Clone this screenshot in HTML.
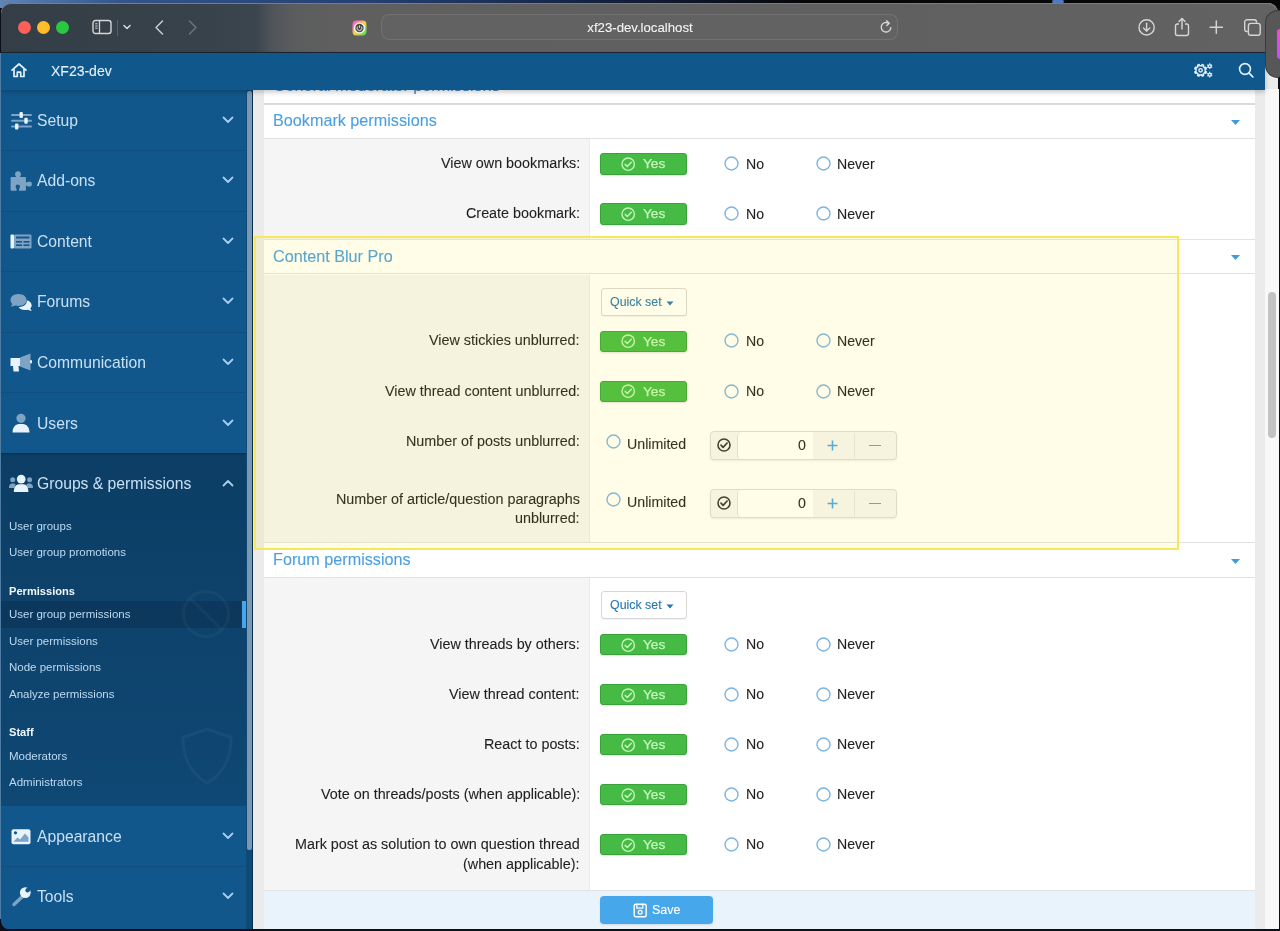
<!DOCTYPE html>
<html><head><meta charset="utf-8"><style>
html,body{margin:0;padding:0;width:1280px;height:931px;overflow:hidden;background:#0c1424;}
.a,.t{position:absolute;}
.ns{-webkit-text-stroke:0 !important;}
.t{white-space:nowrap;font-family:"Liberation Sans", sans-serif;-webkit-text-stroke:0.1px currentColor;will-change:transform;}
body{font-family:"Liberation Sans", sans-serif;}
</style></head><body>
<div class="a" style="left:0px;top:0px;width:1280px;height:931px;background:#0a0f18;"></div><div class="a" style="left:0px;top:0px;width:1280px;height:8px;background:linear-gradient(90deg,#5f84b5 0px,#34558a 120px,#243e70 380px,#111c36 640px,#060709 800px,#060709 1280px);"></div><div class="a" style="left:1052px;top:0px;width:12px;height:3px;background:#4d7bc0;border-radius:2px;"></div><div class="a" style="left:1px;top:3px;width:1277px;height:927px;border-radius:10px;overflow:hidden;background:#ebebeb;"></div><div class="a" style="left:1px;top:3px;width:1277px;height:49px;background:linear-gradient(90deg,#343e47 0px,#37424b 200px,#3b454e 255px,#50555a 272px,#5b5c5d 292px,#5f5f5f 330px,#606060 900px,#626262 1278px);border-top-left-radius:10px;border-top-right-radius:10px;box-shadow:inset 0 1px 0 #7c7c7c;"></div><div class="a" style="left:1px;top:52px;width:1277px;height:1px;background:#1c2630;"></div><div class="a" style="left:18.0px;top:20.5px;width:13px;height:13px;border-radius:50%;background:#fe5f57;"></div><div class="a" style="left:37.0px;top:20.5px;width:13px;height:13px;border-radius:50%;background:#febc2e;"></div><div class="a" style="left:56.0px;top:20.5px;width:13px;height:13px;border-radius:50%;background:#28c840;"></div><svg class="a" style="left:92px;top:19px;" width="20" height="16" viewBox="0 0 20 16"><rect x="1" y="1.5" width="18" height="13" rx="2.5" fill="none" stroke="#d6d6d6" stroke-width="1.4"/><line x1="7.5" y1="2" x2="7.5" y2="14" stroke="#d6d6d6" stroke-width="1.3"/><line x1="3.2" y1="4.8" x2="5.6" y2="4.8" stroke="#d6d6d6" stroke-width="1"/><line x1="3.2" y1="7" x2="5.6" y2="7" stroke="#d6d6d6" stroke-width="1"/><line x1="3.2" y1="9.2" x2="5.6" y2="9.2" stroke="#d6d6d6" stroke-width="1"/></svg><div class="a" style="left:117px;top:20px;width:1px;height:16px;background:#56606a;"></div><svg class="a" style="left:122px;top:23px;" width="10" height="8" viewBox="0 0 10 8"><polyline points="2,2.5 5,5.5 8,2.5" fill="none" stroke="#d6d6d6" stroke-width="1.6" stroke-linecap="round" stroke-linejoin="round"/></svg><svg class="a" style="left:153px;top:19px;" width="12" height="17" viewBox="0 0 12 17"><polyline points="9.5,2 3,8.5 9.5,15" fill="none" stroke="#c9cdd1" stroke-width="1.5" stroke-linecap="round" stroke-linejoin="round"/></svg><svg class="a" style="left:187px;top:19px;" width="12" height="17" viewBox="0 0 12 17"><polyline points="2.5,2 9,8.5 2.5,15" fill="none" stroke="#6d757b" stroke-width="1.5" stroke-linecap="round" stroke-linejoin="round"/></svg><svg class="a" style="left:352px;top:19.5px;" width="15" height="16" viewBox="0 0 15 16"><defs><linearGradient id="fg" x1="0" y1="0" x2="1" y2="1"><stop offset="0" stop-color="#ff3df0"/><stop offset=".5" stop-color="#ffd23a"/><stop offset="1" stop-color="#2fe06a"/></linearGradient></defs><rect x="0.5" y="0.5" width="14" height="15" rx="4" fill="url(#fg)"/><circle cx="7.5" cy="8" r="5.6" fill="#f4f4f4"/><circle cx="7.5" cy="8" r="4.2" fill="#4a4a4a"/><path d="M5.6 6.6 A2.4 2.4 0 1 0 9.4 6.6" fill="none" stroke="#eee" stroke-width="0.9"/><line x1="7.5" y1="5.4" x2="7.5" y2="7.8" stroke="#eee" stroke-width="0.9"/></svg><div class="a" style="left:381px;top:14px;width:517px;height:26px;background:#626262;border-radius:8px;box-shadow:inset 0 0 0 1px rgba(255,255,255,0.10);"></div><div class="t" style="top:18.83px;font-size:13.2px;line-height:18px;color:#f4f4f4;font-weight:400;left:340.00px;width:600px;text-align:center;">xf23-dev.localhost</div><svg class="a" style="left:879px;top:19px;" width="15" height="16" viewBox="0 0 15 16"><path d="M11.8 8.8 A4.8 4.8 0 1 1 9.6 4.2" fill="none" stroke="#d6d6d6" stroke-width="1.4" stroke-linecap="round"/><polyline points="7.6,1.8 10.2,4.2 7.8,6.6" fill="none" stroke="#d6d6d6" stroke-width="1.4" stroke-linecap="round" stroke-linejoin="round"/></svg><svg class="a" style="left:1137px;top:17.5px;" width="19" height="19" viewBox="0 0 19 19"><circle cx="9.6" cy="9.4" r="7.6" fill="none" stroke="#d6d6d6" stroke-width="1.4"/><line x1="9.6" y1="5.2" x2="9.6" y2="13" stroke="#d6d6d6" stroke-width="1.4" stroke-linecap="round"/><polyline points="6.5,10 9.6,13.1 12.7,10" fill="none" stroke="#d6d6d6" stroke-width="1.4" stroke-linecap="round" stroke-linejoin="round"/></svg><svg class="a" style="left:1173px;top:16.5px;" width="18" height="20" viewBox="0 0 18 20"><path d="M6 7 H4.5 A2 2 0 0 0 2.5 9 V16.5 A2 2 0 0 0 4.5 18.5 H13.5 A2 2 0 0 0 15.5 16.5 V9 A2 2 0 0 0 13.5 7 H12" fill="none" stroke="#d6d6d6" stroke-width="1.4"/><line x1="9" y1="1.8" x2="9" y2="12" stroke="#d6d6d6" stroke-width="1.4" stroke-linecap="round"/><polyline points="6,4.6 9,1.6 12,4.6" fill="none" stroke="#d6d6d6" stroke-width="1.4" stroke-linecap="round" stroke-linejoin="round"/></svg><svg class="a" style="left:1208px;top:18.5px;" width="16" height="16" viewBox="0 0 16 16"><line x1="8.3" y1="2" x2="8.3" y2="14.3" stroke="#d6d6d6" stroke-width="1.5" stroke-linecap="round"/><line x1="2.1" y1="8.2" x2="14.4" y2="8.2" stroke="#d6d6d6" stroke-width="1.5" stroke-linecap="round"/></svg><svg class="a" style="left:1243px;top:18px;" width="19" height="19" viewBox="0 0 19 19"><path d="M4.8 13.5 H4 A2.3 2.3 0 0 1 1.7 11.2 V4 A2.3 2.3 0 0 1 4 1.7 H11.2 A2.3 2.3 0 0 1 13.5 4 V4.8" fill="none" stroke="#d6d6d6" stroke-width="1.4"/><rect x="5.4" y="5.4" width="11.8" height="11.8" rx="2.3" fill="none" stroke="#d6d6d6" stroke-width="1.4"/></svg><div class="a" style="left:1265.5px;top:11px;width:24px;height:66px;background:#575757;border-radius:13px;box-shadow:0 0 0 1px #3a3a3a;z-index:20;"></div><div class="a" style="left:1277px;top:29px;width:6px;height:30px;background:linear-gradient(180deg,#ff46d6,#c24dff);border-radius:3px;z-index:21;"></div><div class="a" style="left:1px;top:53px;width:1264px;height:36.5px;background:#10578c;z-index:5;box-shadow:0 2px 5px rgba(0,0,0,.22);"></div><svg class="a" style="left:10px;top:62px;z-index:6;" width="18" height="16" viewBox="0 0 18 16"><path d="M2 8.2 L9 2 L16 8.2" fill="none" stroke="#e4f0fb" stroke-width="1.7" stroke-linecap="round" stroke-linejoin="round"/><path d="M4 7 V14.5 H7.3 V10.2 H10.7 V14.5 H14 V7" fill="none" stroke="#e4f0fb" stroke-width="1.7" stroke-linejoin="round"/></svg><div class="t" style="top:60.95px;font-size:14.0px;line-height:20px;color:#e4f0fb;font-weight:400;left:50.80px;z-index:6;">XF23-dev</div><svg class="a" style="left:1193px;top:62px;z-index:6;" width="21" height="18" viewBox="0 0 21 18"><path d="M12.20,8.30 L12.09,9.29 L13.39,9.86 L12.80,11.29 L11.47,10.78 L10.85,11.55 L10.08,12.17 L10.59,13.50 L9.16,14.09 L8.59,12.79 L7.60,12.90 L6.61,12.79 L6.04,14.09 L4.61,13.50 L5.12,12.17 L4.35,11.55 L3.73,10.78 L2.40,11.29 L1.81,9.86 L3.11,9.29 L3.00,8.30 L3.11,7.31 L1.81,6.74 L2.40,5.31 L3.73,5.82 L4.35,5.05 L5.12,4.43 L4.61,3.10 L6.04,2.51 L6.61,3.81 L7.60,3.70 L8.59,3.81 L9.16,2.51 L10.59,3.10 L10.08,4.43 L10.85,5.05 L11.47,5.82 L12.80,5.31 L13.39,6.74 L12.09,7.31 Z" fill="none" stroke="#e4f0fb" stroke-width="1.5" stroke-linejoin="round"/><circle cx="7.6" cy="8.3" r="1.7" fill="none" stroke="#e4f0fb" stroke-width="1.4"/><path d="M18.80,4.20 L18.73,4.74 L19.45,5.12 L18.88,6.12 L18.18,5.68 L17.75,6.02 L17.24,6.23 L17.27,7.04 L16.13,7.04 L16.16,6.23 L15.65,6.02 L15.22,5.68 L14.52,6.12 L13.95,5.12 L14.67,4.74 L14.60,4.20 L14.67,3.66 L13.95,3.28 L14.52,2.28 L15.22,2.72 L15.65,2.38 L16.16,2.17 L16.13,1.36 L17.27,1.36 L17.24,2.17 L17.75,2.38 L18.18,2.72 L18.88,2.28 L19.45,3.28 L18.73,3.66 Z" fill="#e4f0fb"/><path d="M18.80,12.70 L18.73,13.24 L19.45,13.62 L18.88,14.62 L18.18,14.18 L17.75,14.52 L17.24,14.73 L17.27,15.54 L16.13,15.54 L16.16,14.73 L15.65,14.52 L15.22,14.18 L14.52,14.62 L13.95,13.62 L14.67,13.24 L14.60,12.70 L14.67,12.16 L13.95,11.78 L14.52,10.78 L15.22,11.22 L15.65,10.88 L16.16,10.67 L16.13,9.86 L17.27,9.86 L17.24,10.67 L17.75,10.88 L18.18,11.22 L18.88,10.78 L19.45,11.78 L18.73,12.16 Z" fill="#e4f0fb"/><circle cx="16.7" cy="4.2" r="0.8" fill="#10578c"/><circle cx="16.7" cy="12.7" r="0.8" fill="#10578c"/></svg><svg class="a" style="left:1237px;top:62px;z-index:6;" width="18" height="18" viewBox="0 0 18 18"><circle cx="8" cy="7" r="5.4" fill="none" stroke="#e4f0fb" stroke-width="1.6"/><line x1="11.9" y1="10.9" x2="15.8" y2="14.8" stroke="#e4f0fb" stroke-width="1.8" stroke-linecap="round"/></svg><div class="a" style="left:1px;top:89px;width:245px;height:841px;background:#11578b;"></div><div class="a" style="left:246px;top:89px;width:6px;height:841px;background:#0e4a77;"></div><div class="a" style="left:252px;top:89px;width:1px;height:841px;background:#0b2f4a;"></div><div class="a" style="left:1px;top:150px;width:244px;height:1px;background:#0f4e7e;"></div><div class="a" style="left:1px;top:211px;width:244px;height:1px;background:#0f4e7e;"></div><div class="a" style="left:1px;top:271px;width:244px;height:1px;background:#0f4e7e;"></div><div class="a" style="left:1px;top:332px;width:244px;height:1px;background:#0f4e7e;"></div><div class="a" style="left:1px;top:392px;width:244px;height:1px;background:#0f4e7e;"></div><div class="a" style="left:1px;top:866px;width:244px;height:1px;background:#0f4e7e;"></div><div class="a" style="left:1px;top:453px;width:245px;height:353px;background:linear-gradient(180deg,#0c3e65 0px,#0d4169 120px,#0f4874 353px);box-shadow:inset 0 2px 2px -1px rgba(0,0,0,.25);"></div><div class="a" style="left:1px;top:601px;width:245px;height:27px;background:#0b385c;"></div><div class="a" style="left:242px;top:601px;width:4px;height:27px;background:#4aa6ec;"></div><svg class="a" style="left:180px;top:588px;opacity:.035;" width="52" height="52" viewBox="0 0 52 52"><g fill="none" stroke="#ffffff" stroke-width="3"><circle cx="26" cy="26" r="22.5"/><line x1="11" y1="11" x2="41" y2="41"/></g></svg><svg class="a" style="left:179px;top:726px;opacity:.035;" width="56" height="60" viewBox="0 0 56 60"><path d="M28 3 C36 6 44 9 52 11 C52 34 44 48 28 57 C12 48 4 34 4 11 C12 9 20 6 28 3 Z" fill="none" stroke="#ffffff" stroke-width="3" stroke-linejoin="round"/></svg><div class="a" style="left:247px;top:91px;width:4.5px;height:759px;background:#7b98b3;border-radius:2px;"></div><div class="t ns" style="top:109.86px;font-size:15.7px;line-height:22px;color:#c8e0f4;font-weight:400;left:36.80px;">Setup</div><svg class="a" style="left:222px;top:116px;" width="12" height="8" viewBox="0 0 12 8"><polyline points="1.5,1.5 6,6 10.5,1.5" fill="none" stroke="#a8cdee" stroke-width="1.8" stroke-linecap="round" stroke-linejoin="round"/></svg><div class="t ns" style="top:170.26px;font-size:15.7px;line-height:22px;color:#c8e0f4;font-weight:400;left:36.80px;">Add-ons</div><svg class="a" style="left:222px;top:176.4px;" width="12" height="8" viewBox="0 0 12 8"><polyline points="1.5,1.5 6,6 10.5,1.5" fill="none" stroke="#a8cdee" stroke-width="1.8" stroke-linecap="round" stroke-linejoin="round"/></svg><div class="t ns" style="top:230.86px;font-size:15.7px;line-height:22px;color:#c8e0f4;font-weight:400;left:36.80px;">Content</div><svg class="a" style="left:222px;top:237px;" width="12" height="8" viewBox="0 0 12 8"><polyline points="1.5,1.5 6,6 10.5,1.5" fill="none" stroke="#a8cdee" stroke-width="1.8" stroke-linecap="round" stroke-linejoin="round"/></svg><div class="t ns" style="top:291.26px;font-size:15.7px;line-height:22px;color:#c8e0f4;font-weight:400;left:36.80px;">Forums</div><svg class="a" style="left:222px;top:297.4px;" width="12" height="8" viewBox="0 0 12 8"><polyline points="1.5,1.5 6,6 10.5,1.5" fill="none" stroke="#a8cdee" stroke-width="1.8" stroke-linecap="round" stroke-linejoin="round"/></svg><div class="t ns" style="top:351.56px;font-size:15.7px;line-height:22px;color:#c8e0f4;font-weight:400;left:36.80px;">Communication</div><svg class="a" style="left:222px;top:357.7px;" width="12" height="8" viewBox="0 0 12 8"><polyline points="1.5,1.5 6,6 10.5,1.5" fill="none" stroke="#a8cdee" stroke-width="1.8" stroke-linecap="round" stroke-linejoin="round"/></svg><div class="t ns" style="top:412.56px;font-size:15.7px;line-height:22px;color:#c8e0f4;font-weight:400;left:36.80px;">Users</div><svg class="a" style="left:222px;top:418.7px;" width="12" height="8" viewBox="0 0 12 8"><polyline points="1.5,1.5 6,6 10.5,1.5" fill="none" stroke="#a8cdee" stroke-width="1.8" stroke-linecap="round" stroke-linejoin="round"/></svg><div class="t ns" style="top:473.06px;font-size:15.7px;line-height:22px;color:#c8e0f4;font-weight:400;left:36.80px;">Groups &amp; permissions</div><svg class="a" style="left:222px;top:479.2px;" width="12" height="8" viewBox="0 0 12 8"><polyline points="1.5,6.5 6,2 10.5,6.5" fill="none" stroke="#a8cdee" stroke-width="1.8" stroke-linecap="round" stroke-linejoin="round"/></svg><div class="t ns" style="top:826.16px;font-size:15.7px;line-height:22px;color:#c8e0f4;font-weight:400;left:36.80px;">Appearance</div><svg class="a" style="left:222px;top:832.3px;" width="12" height="8" viewBox="0 0 12 8"><polyline points="1.5,1.5 6,6 10.5,1.5" fill="none" stroke="#a8cdee" stroke-width="1.8" stroke-linecap="round" stroke-linejoin="round"/></svg><div class="t ns" style="top:886.16px;font-size:15.7px;line-height:22px;color:#c8e0f4;font-weight:400;left:36.80px;">Tools</div><svg class="a" style="left:222px;top:892.3px;" width="12" height="8" viewBox="0 0 12 8"><polyline points="1.5,1.5 6,6 10.5,1.5" fill="none" stroke="#a8cdee" stroke-width="1.8" stroke-linecap="round" stroke-linejoin="round"/></svg><div class="t ns" style="top:517.72px;font-size:11.5px;line-height:16px;color:#bcd9f0;font-weight:400;left:9.20px;">User groups</div><div class="t ns" style="top:543.82px;font-size:11.5px;line-height:16px;color:#bcd9f0;font-weight:400;left:9.20px;">User group promotions</div><div class="t ns" style="top:582.95px;font-size:11.1px;line-height:16px;color:#f2f7fb;font-weight:700;left:9.20px;">Permissions</div><div class="t ns" style="top:606.02px;font-size:11.5px;line-height:16px;color:#bcd9f0;font-weight:400;left:9.20px;">User group permissions</div><div class="t ns" style="top:632.62px;font-size:11.5px;line-height:16px;color:#bcd9f0;font-weight:400;left:9.20px;">User permissions</div><div class="t ns" style="top:658.82px;font-size:11.5px;line-height:16px;color:#bcd9f0;font-weight:400;left:9.20px;">Node permissions</div><div class="t ns" style="top:685.62px;font-size:11.5px;line-height:16px;color:#bcd9f0;font-weight:400;left:9.20px;">Analyze permissions</div><div class="t ns" style="top:724.35px;font-size:11.1px;line-height:16px;color:#f2f7fb;font-weight:700;left:9.20px;">Staff</div><div class="t ns" style="top:747.92px;font-size:11.5px;line-height:16px;color:#bcd9f0;font-weight:400;left:9.20px;">Moderators</div><div class="t ns" style="top:774.32px;font-size:11.5px;line-height:16px;color:#bcd9f0;font-weight:400;left:9.20px;">Administrators</div><svg class="a" style="left:10px;top:110px;" width="23" height="20" viewBox="0 0 23 20"><g stroke="#7fa3c4" stroke-width="2" stroke-linecap="round"><line x1="2" y1="5" x2="21" y2="5"/><line x1="2" y1="10.8" x2="21" y2="10.8"/><line x1="2" y1="16.6" x2="21" y2="16.6"/></g><g fill="#e9f3fb"><rect x="9.5" y="2" width="3.4" height="6" rx="1"/><rect x="14.3" y="7.8" width="3.4" height="6" rx="1"/><rect x="5" y="13.6" width="3.4" height="6" rx="1"/></g></svg><svg class="a" style="left:9px;top:170px;" width="24" height="22" viewBox="0 0 24 22"><rect x="1.6" y="7" width="15.3" height="13.7" rx="0.8" fill="#7fa3c4"/><circle cx="9" cy="4.2" r="2.9" fill="#7fa3c4"/><rect x="7.3" y="5" width="3.4" height="3" fill="#7fa3c4"/><circle cx="20.3" cy="14" r="2.6" fill="#7fa3c4"/><rect x="16" y="12.3" width="3" height="3.4" fill="#7fa3c4"/><circle cx="8.8" cy="16.8" r="2.2" fill="#11578b"/><rect x="7.6" y="17" width="2.4" height="4" fill="#11578b"/></svg><svg class="a" style="left:9px;top:233px;" width="24" height="17" viewBox="0 0 24 17"><rect x="1.5" y="1.5" width="3.5" height="14" rx="1" fill="#e9f3fb"/><rect x="5" y="1.5" width="17.5" height="14" rx="1.2" fill="#7fa3c4"/><g fill="#11578b"><rect x="7" y="3.5" width="13.5" height="2"/><rect x="7" y="8" width="6" height="1.6"/><rect x="14.5" y="8" width="6" height="1.6"/><rect x="7" y="11.4" width="6" height="1.6"/><rect x="14.5" y="11.4" width="6" height="1.6"/></g></svg><svg class="a" style="left:9px;top:292px;" width="24" height="20" viewBox="0 0 24 20"><path d="M9.5 2 C4.5 2 1.5 4.8 1.5 8 C1.5 9.6 2.3 11 3.5 12 L1.5 14.8 L6.5 13.5 C7.5 13.8 8.5 14 9.5 14 C14.5 14 17.5 11.2 17.5 8 C17.5 4.8 14.5 2 9.5 2 Z" fill="#7fa3c4"/><path d="M17.8 8.2 C20.8 9 22.7 11 22.7 13.2 C22.7 14.4 22.1 15.5 21.2 16.3 L22.7 19 L18.5 17.8 C17.7 18 16.9 18.1 16 18.1 C13 18.1 10.6 16.8 9.6 15 C14.5 15 18.2 12.2 17.8 8.2 Z" fill="#e9f3fb"/></svg><svg class="a" style="left:9px;top:352px;" width="24" height="21" viewBox="0 0 24 21"><path d="M11 5.5 L21.5 1.5 V18.5 L11 14.5 Z" fill="#7fa3c4"/><rect x="21" y="8" width="2" height="3.5" rx="1" fill="#e9f3fb"/><path d="M1.5 6 H11 V14 H9.5 L10 19.5 H4.5 L4 14 H1.5 Z" fill="#e9f3fb"/></svg><svg class="a" style="left:11px;top:412px;" width="20" height="22" viewBox="0 0 20 22"><circle cx="10" cy="6.3" r="4.6" fill="#7fa3c4"/><path d="M1.5 20.5 C1.5 15.5 4.5 12 8 12 H12 C15.5 12 18.5 15.5 18.5 20.5 Z" fill="#e9f3fb"/></svg><svg class="a" style="left:8px;top:473px;" width="26" height="21" viewBox="0 0 26 21"><g fill="#7fa3c4"><circle cx="4.7" cy="6.8" r="2.5"/><circle cx="21.6" cy="6.8" r="2.5"/><path d="M1 15 C1 11.5 2.5 10.5 4.8 10.5 C6 10.5 7 10.8 7.5 11.5 L6.5 15 Z"/><path d="M25 15 C25 11.5 23.5 10.5 21.2 10.5 C20 10.5 19 10.8 18.5 11.5 L19.5 15 Z"/></g><circle cx="13.2" cy="6.1" r="4.4" fill="#e9f3fb"/><path d="M5.8 19 C5.8 14 8 11.2 11 11.2 H15.4 C18.4 11.2 20.4 14 20.4 19 Z" fill="#e9f3fb"/></svg><svg class="a" style="left:10px;top:828px;" width="22" height="17" viewBox="0 0 22 17"><rect x="1.5" y="1.2" width="19" height="15" rx="2" fill="#e9f3fb"/><path d="M3.5 13.8 L7.5 9.5 L10 11.5 L15 5.5 L18.5 9.5 V13.8 Z" fill="#7fa3c4"/><circle cx="5.5" cy="4.8" r="1.6" fill="#11578b"/></svg><svg class="a" style="left:9px;top:884px;" width="24" height="24" viewBox="0 0 24 24"><path d="M15 11 L5 20.5" stroke="#7fa3c4" stroke-width="3.4" stroke-linecap="round"/><circle cx="16.3" cy="8.6" r="5.4" fill="#e9f3fb"/><circle cx="18.6" cy="6.3" r="2.2" fill="#11578b"/><path d="M18.2 5 L21.5 1.7 L23.6 3.8 L20.3 7.1 Z" fill="#11578b"/></svg><div class="a" style="left:253px;top:89px;width:1012px;height:841px;background:#ebebeb;"></div><div class="a" style="left:264px;top:89px;width:991px;height:841px;background:#ffffff;"></div><div class="t" style="top:74.39px;font-size:16.2px;line-height:23px;color:#3f8ccc;font-weight:400;left:273.00px;">General moderator permissions</div><div class="a" style="left:264px;top:104px;width:991px;height:34px;background:#ffffff;"></div><div class="a" style="left:264px;top:138px;width:991px;height:1px;background:#e2e2e2;"></div><div class="t" style="top:109.39px;font-size:16.2px;line-height:23px;color:#4a9fe0;font-weight:400;left:273.00px;">Bookmark permissions</div><svg class="a" style="left:1229.5px;top:118.8px;" width="11" height="7" viewBox="0 0 11 7"><path d="M1 1 H10 L5.5 6 Z" fill="#3d9be0"/></svg><div class="a" style="left:264px;top:103px;width:991px;height:2px;background:#dadada;"></div><div class="a" style="left:264px;top:139px;width:325px;height:100px;background:#f5f5f5;"></div><div class="a" style="left:589px;top:139px;width:1px;height:100px;background:#ebebeb;"></div><div class="a" style="left:264px;top:239px;width:991px;height:1px;background:#e2e2e2;"></div><div class="t" style="top:153.13px;font-size:14.35px;line-height:20px;color:#1f1f1f;font-weight:400;right:700.10px;text-align:right;">View own bookmarks:</div><div class="a" style="left:600px;top:153.3px;width:86.5px;height:21.3px;background:#45bb45;border:1px solid #3aa23a;box-sizing:border-box;border-radius:3px;box-shadow:0 1px 2px rgba(0,0,0,.12);"></div><svg class="a" style="left:620.4px;top:155.8px;" width="16.4" height="16.4" viewBox="0 0 16.4 16.4"><circle cx="8.2" cy="8.2" r="6.2" fill="none" stroke="#c0f5b6" stroke-width="1.45"/><polyline points="5.199999999999999,8.399999999999999 7.299999999999999,10.5 11.299999999999999,6.199999999999999" fill="none" stroke="#c0f5b6" stroke-width="1.55" stroke-linecap="round" stroke-linejoin="round"/></svg><div class="t" style="top:154.35px;font-size:13.7px;line-height:19px;color:#c6f7bd;font-weight:400;left:643.00px;-webkit-text-stroke:0.25px currentColor;">Yes</div><svg class="a" style="left:724.1px;top:156.10000000000002px;" width="15" height="15" viewBox="0 0 15 15"><circle cx="7.5" cy="7.5" r="6.5" fill="#ffffff" stroke="#7db3df" stroke-width="1.4"/></svg><div class="t" style="top:153.71px;font-size:14.1px;line-height:20px;color:#1f1f1f;font-weight:400;left:745.60px;">No</div><svg class="a" style="left:815.8px;top:156.10000000000002px;" width="15" height="15" viewBox="0 0 15 15"><circle cx="7.5" cy="7.5" r="6.5" fill="#ffffff" stroke="#7db3df" stroke-width="1.4"/></svg><div class="t" style="top:153.71px;font-size:14.1px;line-height:20px;color:#1f1f1f;font-weight:400;left:837.20px;">Never</div><div class="t" style="top:203.13px;font-size:14.35px;line-height:20px;color:#1f1f1f;font-weight:400;right:700.10px;text-align:right;">Create bookmark:</div><div class="a" style="left:600px;top:203.3px;width:86.5px;height:21.3px;background:#45bb45;border:1px solid #3aa23a;box-sizing:border-box;border-radius:3px;box-shadow:0 1px 2px rgba(0,0,0,.12);"></div><svg class="a" style="left:620.4px;top:205.8px;" width="16.4" height="16.4" viewBox="0 0 16.4 16.4"><circle cx="8.2" cy="8.2" r="6.2" fill="none" stroke="#c0f5b6" stroke-width="1.45"/><polyline points="5.199999999999999,8.399999999999999 7.299999999999999,10.5 11.299999999999999,6.199999999999999" fill="none" stroke="#c0f5b6" stroke-width="1.55" stroke-linecap="round" stroke-linejoin="round"/></svg><div class="t" style="top:204.35px;font-size:13.7px;line-height:19px;color:#c6f7bd;font-weight:400;left:643.00px;-webkit-text-stroke:0.25px currentColor;">Yes</div><svg class="a" style="left:724.1px;top:206.10000000000002px;" width="15" height="15" viewBox="0 0 15 15"><circle cx="7.5" cy="7.5" r="6.5" fill="#ffffff" stroke="#7db3df" stroke-width="1.4"/></svg><div class="t" style="top:203.71px;font-size:14.1px;line-height:20px;color:#1f1f1f;font-weight:400;left:745.60px;">No</div><svg class="a" style="left:815.8px;top:206.10000000000002px;" width="15" height="15" viewBox="0 0 15 15"><circle cx="7.5" cy="7.5" r="6.5" fill="#ffffff" stroke="#7db3df" stroke-width="1.4"/></svg><div class="t" style="top:203.71px;font-size:14.1px;line-height:20px;color:#1f1f1f;font-weight:400;left:837.20px;">Never</div><div class="a" style="left:264px;top:239.5px;width:991px;height:34px;background:#ffffff;"></div><div class="a" style="left:264px;top:273px;width:991px;height:1px;background:#e2e2e2;"></div><div class="t" style="top:244.89px;font-size:16.2px;line-height:23px;color:#4a9fe0;font-weight:400;left:273.00px;">Content Blur Pro</div><svg class="a" style="left:1229.5px;top:254.3px;" width="11" height="7" viewBox="0 0 11 7"><path d="M1 1 H10 L5.5 6 Z" fill="#3d9be0"/></svg><div class="a" style="left:264px;top:274.5px;width:325px;height:268.0px;background:#f5f5f5;"></div><div class="a" style="left:589px;top:274.5px;width:1px;height:268.0px;background:#ebebeb;"></div><div class="a" style="left:264px;top:542px;width:991px;height:1px;background:#e2e2e2;"></div><div class="a" style="left:600.5px;top:288.3px;width:86px;height:27.5px;background:#ffffff;border:1px solid #d8d8d8;box-sizing:border-box;border-radius:3px;box-shadow:0 1px 1px rgba(0,0,0,.06);"></div><div class="t" style="top:293.80px;font-size:12.4px;line-height:17px;color:#2577b1;font-weight:400;left:609.90px;">Quick set</div><svg class="a" style="left:666px;top:300.8px;" width="8" height="5" viewBox="0 0 8 5"><path d="M0.5 0.5 H7.5 L4 4.5 Z" fill="#2577b1"/></svg><div class="t" style="top:330.33px;font-size:14.35px;line-height:20px;color:#1f1f1f;font-weight:400;right:700.10px;text-align:right;">View stickies unblurred:</div><div class="a" style="left:600px;top:330.5px;width:86.5px;height:21.3px;background:#45bb45;border:1px solid #3aa23a;box-sizing:border-box;border-radius:3px;box-shadow:0 1px 2px rgba(0,0,0,.12);"></div><svg class="a" style="left:620.4px;top:333.0px;" width="16.4" height="16.4" viewBox="0 0 16.4 16.4"><circle cx="8.2" cy="8.2" r="6.2" fill="none" stroke="#c0f5b6" stroke-width="1.45"/><polyline points="5.199999999999999,8.399999999999999 7.299999999999999,10.5 11.299999999999999,6.199999999999999" fill="none" stroke="#c0f5b6" stroke-width="1.55" stroke-linecap="round" stroke-linejoin="round"/></svg><div class="t" style="top:331.55px;font-size:13.7px;line-height:19px;color:#c6f7bd;font-weight:400;left:643.00px;-webkit-text-stroke:0.25px currentColor;">Yes</div><svg class="a" style="left:724.1px;top:333.3px;" width="15" height="15" viewBox="0 0 15 15"><circle cx="7.5" cy="7.5" r="6.5" fill="#ffffff" stroke="#7db3df" stroke-width="1.4"/></svg><div class="t" style="top:330.91px;font-size:14.1px;line-height:20px;color:#1f1f1f;font-weight:400;left:745.60px;">No</div><svg class="a" style="left:815.8px;top:333.3px;" width="15" height="15" viewBox="0 0 15 15"><circle cx="7.5" cy="7.5" r="6.5" fill="#ffffff" stroke="#7db3df" stroke-width="1.4"/></svg><div class="t" style="top:330.91px;font-size:14.1px;line-height:20px;color:#1f1f1f;font-weight:400;left:837.20px;">Never</div><div class="t" style="top:380.53px;font-size:14.35px;line-height:20px;color:#1f1f1f;font-weight:400;right:700.10px;text-align:right;">View thread content unblurred:</div><div class="a" style="left:600px;top:380.7px;width:86.5px;height:21.3px;background:#45bb45;border:1px solid #3aa23a;box-sizing:border-box;border-radius:3px;box-shadow:0 1px 2px rgba(0,0,0,.12);"></div><svg class="a" style="left:620.4px;top:383.2px;" width="16.4" height="16.4" viewBox="0 0 16.4 16.4"><circle cx="8.2" cy="8.2" r="6.2" fill="none" stroke="#c0f5b6" stroke-width="1.45"/><polyline points="5.199999999999999,8.399999999999999 7.299999999999999,10.5 11.299999999999999,6.199999999999999" fill="none" stroke="#c0f5b6" stroke-width="1.55" stroke-linecap="round" stroke-linejoin="round"/></svg><div class="t" style="top:381.75px;font-size:13.7px;line-height:19px;color:#c6f7bd;font-weight:400;left:643.00px;-webkit-text-stroke:0.25px currentColor;">Yes</div><svg class="a" style="left:724.1px;top:383.5px;" width="15" height="15" viewBox="0 0 15 15"><circle cx="7.5" cy="7.5" r="6.5" fill="#ffffff" stroke="#7db3df" stroke-width="1.4"/></svg><div class="t" style="top:381.11px;font-size:14.1px;line-height:20px;color:#1f1f1f;font-weight:400;left:745.60px;">No</div><svg class="a" style="left:815.8px;top:383.5px;" width="15" height="15" viewBox="0 0 15 15"><circle cx="7.5" cy="7.5" r="6.5" fill="#ffffff" stroke="#7db3df" stroke-width="1.4"/></svg><div class="t" style="top:381.11px;font-size:14.1px;line-height:20px;color:#1f1f1f;font-weight:400;left:837.20px;">Never</div><div class="t" style="top:430.53px;font-size:14.35px;line-height:20px;color:#1f1f1f;font-weight:400;right:700.10px;text-align:right;">Number of posts unblurred:</div><svg class="a" style="left:606.2px;top:434.3px;" width="15" height="15" viewBox="0 0 15 15"><circle cx="7.5" cy="7.5" r="6.5" fill="#ffffff" stroke="#7db3df" stroke-width="1.4"/></svg><div class="t" style="top:434.28px;font-size:14.2px;line-height:20px;color:#1f1f1f;font-weight:400;left:627.20px;">Unlimited</div><div class="a" style="left:710px;top:431.2px;width:187px;height:28.5px;background:#f6f6f6;border:1px solid #dcdcdc;box-sizing:border-box;border-radius:4px;box-shadow:0 1px 2px rgba(0,0,0,.08);"></div><div class="a" style="left:737px;top:432.2px;width:75px;height:26.5px;background:#ffffff;border-left:1px solid #e0e0e0;border-radius:4px 0 0 4px;"></div><div class="a" style="left:853.5px;top:433.2px;width:1px;height:24.5px;background:#e4e4e4;"></div><svg class="a" style="left:715.6px;top:437.2px;" width="16" height="16" viewBox="0 0 16 16"><circle cx="8.0" cy="8.0" r="6" fill="none" stroke="#333333" stroke-width="1.6"/><polyline points="5.0,8.2 7.1,10.3 11.1,6.0" fill="none" stroke="#333333" stroke-width="1.7000000000000002" stroke-linecap="round" stroke-linejoin="round"/></svg><div class="t" style="top:434.88px;font-size:14.2px;line-height:20px;color:#1f1f1f;font-weight:400;left:797.50px;">0</div><svg class="a" style="left:826px;top:439.2px;" width="13" height="13" viewBox="0 0 13 13"><path d="M6.5 1.5 V11.5 M1.5 6.5 H11.5" stroke="#47a7eb" stroke-width="1.6"/></svg><div class="a" style="left:869px;top:444.5px;width:11.5px;height:1.6px;background:#47a7eb;"></div><div class="t" style="top:488.53px;font-size:14.35px;line-height:20px;color:#1f1f1f;font-weight:400;right:700.10px;text-align:right;">Number of article/question paragraphs</div><div class="t" style="top:507.93px;font-size:14.35px;line-height:20px;color:#1f1f1f;font-weight:400;right:700.10px;text-align:right;">unblurred:</div><svg class="a" style="left:606.2px;top:492.3px;" width="15" height="15" viewBox="0 0 15 15"><circle cx="7.5" cy="7.5" r="6.5" fill="#ffffff" stroke="#7db3df" stroke-width="1.4"/></svg><div class="t" style="top:492.28px;font-size:14.2px;line-height:20px;color:#1f1f1f;font-weight:400;left:627.20px;">Unlimited</div><div class="a" style="left:710px;top:489.2px;width:187px;height:28.5px;background:#f6f6f6;border:1px solid #dcdcdc;box-sizing:border-box;border-radius:4px;box-shadow:0 1px 2px rgba(0,0,0,.08);"></div><div class="a" style="left:737px;top:490.2px;width:75px;height:26.5px;background:#ffffff;border-left:1px solid #e0e0e0;border-radius:4px 0 0 4px;"></div><div class="a" style="left:853.5px;top:491.2px;width:1px;height:24.5px;background:#e4e4e4;"></div><svg class="a" style="left:715.6px;top:495.2px;" width="16" height="16" viewBox="0 0 16 16"><circle cx="8.0" cy="8.0" r="6" fill="none" stroke="#333333" stroke-width="1.6"/><polyline points="5.0,8.2 7.1,10.3 11.1,6.0" fill="none" stroke="#333333" stroke-width="1.7000000000000002" stroke-linecap="round" stroke-linejoin="round"/></svg><div class="t" style="top:492.88px;font-size:14.2px;line-height:20px;color:#1f1f1f;font-weight:400;left:797.50px;">0</div><svg class="a" style="left:826px;top:497.2px;" width="13" height="13" viewBox="0 0 13 13"><path d="M6.5 1.5 V11.5 M1.5 6.5 H11.5" stroke="#47a7eb" stroke-width="1.6"/></svg><div class="a" style="left:869px;top:502.5px;width:11.5px;height:1.6px;background:#47a7eb;"></div><div class="a" style="left:264px;top:543px;width:991px;height:34px;background:#ffffff;"></div><div class="a" style="left:264px;top:577px;width:991px;height:1px;background:#e2e2e2;"></div><div class="t" style="top:548.39px;font-size:16.2px;line-height:23px;color:#4a9fe0;font-weight:400;left:273.00px;">Forum permissions</div><svg class="a" style="left:1229.5px;top:557.8px;" width="11" height="7" viewBox="0 0 11 7"><path d="M1 1 H10 L5.5 6 Z" fill="#3d9be0"/></svg><div class="a" style="left:264px;top:578px;width:325px;height:312px;background:#f5f5f5;"></div><div class="a" style="left:589px;top:578px;width:1px;height:312px;background:#ebebeb;"></div><div class="a" style="left:264px;top:890px;width:991px;height:1px;background:#e2e2e2;"></div><div class="a" style="left:600.5px;top:591.2px;width:86px;height:27.5px;background:#ffffff;border:1px solid #d8d8d8;box-sizing:border-box;border-radius:3px;box-shadow:0 1px 1px rgba(0,0,0,.06);"></div><div class="t" style="top:596.70px;font-size:12.4px;line-height:17px;color:#2577b1;font-weight:400;left:609.90px;">Quick set</div><svg class="a" style="left:666px;top:603.7px;" width="8" height="5" viewBox="0 0 8 5"><path d="M0.5 0.5 H7.5 L4 4.5 Z" fill="#2577b1"/></svg><div class="t" style="top:633.83px;font-size:14.35px;line-height:20px;color:#1f1f1f;font-weight:400;right:700.10px;text-align:right;">View threads by others:</div><div class="a" style="left:600px;top:634px;width:86.5px;height:21.3px;background:#45bb45;border:1px solid #3aa23a;box-sizing:border-box;border-radius:3px;box-shadow:0 1px 2px rgba(0,0,0,.12);"></div><svg class="a" style="left:620.4px;top:636.5px;" width="16.4" height="16.4" viewBox="0 0 16.4 16.4"><circle cx="8.2" cy="8.2" r="6.2" fill="none" stroke="#c0f5b6" stroke-width="1.45"/><polyline points="5.199999999999999,8.399999999999999 7.299999999999999,10.5 11.299999999999999,6.199999999999999" fill="none" stroke="#c0f5b6" stroke-width="1.55" stroke-linecap="round" stroke-linejoin="round"/></svg><div class="t" style="top:635.05px;font-size:13.7px;line-height:19px;color:#c6f7bd;font-weight:400;left:643.00px;-webkit-text-stroke:0.25px currentColor;">Yes</div><svg class="a" style="left:724.1px;top:636.8px;" width="15" height="15" viewBox="0 0 15 15"><circle cx="7.5" cy="7.5" r="6.5" fill="#ffffff" stroke="#7db3df" stroke-width="1.4"/></svg><div class="t" style="top:634.41px;font-size:14.1px;line-height:20px;color:#1f1f1f;font-weight:400;left:745.60px;">No</div><svg class="a" style="left:815.8px;top:636.8px;" width="15" height="15" viewBox="0 0 15 15"><circle cx="7.5" cy="7.5" r="6.5" fill="#ffffff" stroke="#7db3df" stroke-width="1.4"/></svg><div class="t" style="top:634.41px;font-size:14.1px;line-height:20px;color:#1f1f1f;font-weight:400;left:837.20px;">Never</div><div class="t" style="top:683.83px;font-size:14.35px;line-height:20px;color:#1f1f1f;font-weight:400;right:700.10px;text-align:right;">View thread content:</div><div class="a" style="left:600px;top:684px;width:86.5px;height:21.3px;background:#45bb45;border:1px solid #3aa23a;box-sizing:border-box;border-radius:3px;box-shadow:0 1px 2px rgba(0,0,0,.12);"></div><svg class="a" style="left:620.4px;top:686.5px;" width="16.4" height="16.4" viewBox="0 0 16.4 16.4"><circle cx="8.2" cy="8.2" r="6.2" fill="none" stroke="#c0f5b6" stroke-width="1.45"/><polyline points="5.199999999999999,8.399999999999999 7.299999999999999,10.5 11.299999999999999,6.199999999999999" fill="none" stroke="#c0f5b6" stroke-width="1.55" stroke-linecap="round" stroke-linejoin="round"/></svg><div class="t" style="top:685.05px;font-size:13.7px;line-height:19px;color:#c6f7bd;font-weight:400;left:643.00px;-webkit-text-stroke:0.25px currentColor;">Yes</div><svg class="a" style="left:724.1px;top:686.8px;" width="15" height="15" viewBox="0 0 15 15"><circle cx="7.5" cy="7.5" r="6.5" fill="#ffffff" stroke="#7db3df" stroke-width="1.4"/></svg><div class="t" style="top:684.41px;font-size:14.1px;line-height:20px;color:#1f1f1f;font-weight:400;left:745.60px;">No</div><svg class="a" style="left:815.8px;top:686.8px;" width="15" height="15" viewBox="0 0 15 15"><circle cx="7.5" cy="7.5" r="6.5" fill="#ffffff" stroke="#7db3df" stroke-width="1.4"/></svg><div class="t" style="top:684.41px;font-size:14.1px;line-height:20px;color:#1f1f1f;font-weight:400;left:837.20px;">Never</div><div class="t" style="top:733.83px;font-size:14.35px;line-height:20px;color:#1f1f1f;font-weight:400;right:700.10px;text-align:right;">React to posts:</div><div class="a" style="left:600px;top:734px;width:86.5px;height:21.3px;background:#45bb45;border:1px solid #3aa23a;box-sizing:border-box;border-radius:3px;box-shadow:0 1px 2px rgba(0,0,0,.12);"></div><svg class="a" style="left:620.4px;top:736.5px;" width="16.4" height="16.4" viewBox="0 0 16.4 16.4"><circle cx="8.2" cy="8.2" r="6.2" fill="none" stroke="#c0f5b6" stroke-width="1.45"/><polyline points="5.199999999999999,8.399999999999999 7.299999999999999,10.5 11.299999999999999,6.199999999999999" fill="none" stroke="#c0f5b6" stroke-width="1.55" stroke-linecap="round" stroke-linejoin="round"/></svg><div class="t" style="top:735.05px;font-size:13.7px;line-height:19px;color:#c6f7bd;font-weight:400;left:643.00px;-webkit-text-stroke:0.25px currentColor;">Yes</div><svg class="a" style="left:724.1px;top:736.8px;" width="15" height="15" viewBox="0 0 15 15"><circle cx="7.5" cy="7.5" r="6.5" fill="#ffffff" stroke="#7db3df" stroke-width="1.4"/></svg><div class="t" style="top:734.41px;font-size:14.1px;line-height:20px;color:#1f1f1f;font-weight:400;left:745.60px;">No</div><svg class="a" style="left:815.8px;top:736.8px;" width="15" height="15" viewBox="0 0 15 15"><circle cx="7.5" cy="7.5" r="6.5" fill="#ffffff" stroke="#7db3df" stroke-width="1.4"/></svg><div class="t" style="top:734.41px;font-size:14.1px;line-height:20px;color:#1f1f1f;font-weight:400;left:837.20px;">Never</div><div class="t" style="top:783.83px;font-size:14.35px;line-height:20px;color:#1f1f1f;font-weight:400;right:700.10px;text-align:right;">Vote on threads/posts (when applicable):</div><div class="a" style="left:600px;top:784px;width:86.5px;height:21.3px;background:#45bb45;border:1px solid #3aa23a;box-sizing:border-box;border-radius:3px;box-shadow:0 1px 2px rgba(0,0,0,.12);"></div><svg class="a" style="left:620.4px;top:786.5px;" width="16.4" height="16.4" viewBox="0 0 16.4 16.4"><circle cx="8.2" cy="8.2" r="6.2" fill="none" stroke="#c0f5b6" stroke-width="1.45"/><polyline points="5.199999999999999,8.399999999999999 7.299999999999999,10.5 11.299999999999999,6.199999999999999" fill="none" stroke="#c0f5b6" stroke-width="1.55" stroke-linecap="round" stroke-linejoin="round"/></svg><div class="t" style="top:785.05px;font-size:13.7px;line-height:19px;color:#c6f7bd;font-weight:400;left:643.00px;-webkit-text-stroke:0.25px currentColor;">Yes</div><svg class="a" style="left:724.1px;top:786.8px;" width="15" height="15" viewBox="0 0 15 15"><circle cx="7.5" cy="7.5" r="6.5" fill="#ffffff" stroke="#7db3df" stroke-width="1.4"/></svg><div class="t" style="top:784.41px;font-size:14.1px;line-height:20px;color:#1f1f1f;font-weight:400;left:745.60px;">No</div><svg class="a" style="left:815.8px;top:786.8px;" width="15" height="15" viewBox="0 0 15 15"><circle cx="7.5" cy="7.5" r="6.5" fill="#ffffff" stroke="#7db3df" stroke-width="1.4"/></svg><div class="t" style="top:784.41px;font-size:14.1px;line-height:20px;color:#1f1f1f;font-weight:400;left:837.20px;">Never</div><div class="t" style="top:834.23px;font-size:14.35px;line-height:20px;color:#1f1f1f;font-weight:400;right:700.10px;text-align:right;">Mark post as solution to own question thread</div><div class="t" style="top:853.73px;font-size:14.35px;line-height:20px;color:#1f1f1f;font-weight:400;right:700.10px;text-align:right;">(when applicable):</div><div class="a" style="left:600px;top:834px;width:86.5px;height:21.3px;background:#45bb45;border:1px solid #3aa23a;box-sizing:border-box;border-radius:3px;box-shadow:0 1px 2px rgba(0,0,0,.12);"></div><svg class="a" style="left:620.4px;top:836.5px;" width="16.4" height="16.4" viewBox="0 0 16.4 16.4"><circle cx="8.2" cy="8.2" r="6.2" fill="none" stroke="#c0f5b6" stroke-width="1.45"/><polyline points="5.199999999999999,8.399999999999999 7.299999999999999,10.5 11.299999999999999,6.199999999999999" fill="none" stroke="#c0f5b6" stroke-width="1.55" stroke-linecap="round" stroke-linejoin="round"/></svg><div class="t" style="top:835.05px;font-size:13.7px;line-height:19px;color:#c6f7bd;font-weight:400;left:643.00px;-webkit-text-stroke:0.25px currentColor;">Yes</div><svg class="a" style="left:724.1px;top:836.8px;" width="15" height="15" viewBox="0 0 15 15"><circle cx="7.5" cy="7.5" r="6.5" fill="#ffffff" stroke="#7db3df" stroke-width="1.4"/></svg><div class="t" style="top:834.41px;font-size:14.1px;line-height:20px;color:#1f1f1f;font-weight:400;left:745.60px;">No</div><svg class="a" style="left:815.8px;top:836.8px;" width="15" height="15" viewBox="0 0 15 15"><circle cx="7.5" cy="7.5" r="6.5" fill="#ffffff" stroke="#7db3df" stroke-width="1.4"/></svg><div class="t" style="top:834.41px;font-size:14.1px;line-height:20px;color:#1f1f1f;font-weight:400;left:837.20px;">Never</div><div class="a" style="left:264px;top:891px;width:991px;height:39px;background:#e9f3fb;"></div><div class="a" style="left:600px;top:896.4px;width:112.6px;height:28px;background:#47a7eb;border-radius:4px;box-shadow:0 1px 2px rgba(0,0,0,.1);"></div><svg class="a" style="left:633px;top:902.5px;" width="15" height="15" viewBox="0 0 15 15"><rect x="1.2" y="1.2" width="12" height="12.6" rx="1.5" fill="none" stroke="#ffffff" stroke-width="1.4"/><rect x="3.8" y="1.5" width="6" height="3.6" fill="none" stroke="#ffffff" stroke-width="1.2"/><circle cx="7.2" cy="9.2" r="1.9" fill="none" stroke="#ffffff" stroke-width="1.2"/></svg><div class="t" style="top:901.47px;font-size:12.5px;line-height:18px;color:#ffffff;font-weight:400;left:652.20px;">Save</div><div class="a" style="left:253.5px;top:236px;width:925.5px;height:313.5px;border:2.7px solid #f6e85a;box-sizing:border-box;background:rgba(255,238,0,0.09);z-index:3;"></div><div class="a" style="left:1265px;top:89px;width:14px;height:841px;background:#f8f8f8;"></div><div class="a" style="left:1279px;top:77px;width:1px;height:854px;background:#0a0f18;z-index:30;"></div><div class="a" style="left:1268px;top:292px;width:8px;height:146px;background:#c2c2c2;border-radius:4px;"></div><div class="a" style="left:0px;top:53px;width:1px;height:877px;background:#4f7ca3;z-index:30;"></div><div class="a" style="left:0px;top:929px;width:1280px;height:2px;background:#0a0f18;z-index:30;"></div><svg class="a" style="left:0px;top:919px;z-index:31;" width="12" height="12" viewBox="0 0 12 12"><path d="M0 0 V12 H12 V10.5 A9 9 0 0 1 1 1.5 V0 Z" fill="#0a0f18"/></svg><svg class="a" style="left:1268px;top:919px;z-index:31;" width="12" height="12" viewBox="0 0 12 12"><path d="M12 0 V12 H0 V10 A6 6 0 0 0 11 4 V0 Z" fill="#0a0f18"/></svg>
</body></html>
